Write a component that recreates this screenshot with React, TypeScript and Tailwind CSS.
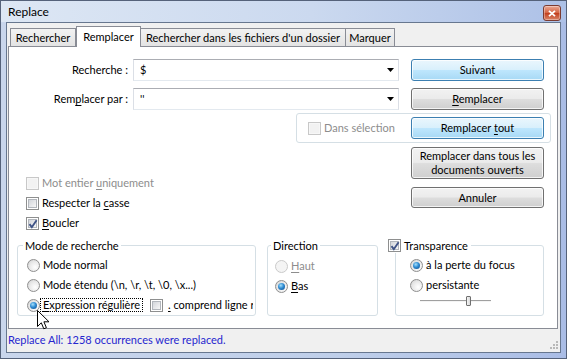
import React from "react";

const FONT = "font-['Lato','Segoe_UI',sans-serif]";

function CheckBox({ checked = false, disabled = false }: { checked?: boolean; disabled?: boolean }) {
  return (
    <span
      className={`relative flex h-[13px] w-[13px] shrink-0 items-center justify-center border ${
        disabled ? "border-[#c8c8c8] bg-[#f7f7f7]" : "border-[#8e8f8f] bg-white"
      }`}
    >
      <span
        className={`h-[9px] w-[9px] ${
          disabled
            ? "bg-[#f2f2f2]"
            : "border border-[#b2b6bc] bg-[linear-gradient(135deg,#d2d5da,#f7f7f7)]"
        }`}
      />
      {checked && (
        <svg className="absolute left-[1px] top-[1px]" width="10" height="10" viewBox="0 0 10 10">
          <path d="M1.5 5.2 L3.8 8.2 L8.6 1.2" fill="none" stroke="#3f5386" strokeWidth="1.9" />
        </svg>
      )}
    </span>
  );
}

function Radio({ checked = false, disabled = false }: { checked?: boolean; disabled?: boolean }) {
  return (
    <span
      className={`flex h-[13px] w-[13px] shrink-0 items-center justify-center rounded-full border ${
        disabled
          ? "border-[#cacaca] bg-[#f4f4f4]"
          : "border-[#8f8f8f] bg-[radial-gradient(circle_at_65%_65%,#ffffff_0%,#e8e8e8_55%,#cccccc_100%)]"
      }`}
    >
      {checked && (
        <span className="h-[7px] w-[7px] rounded-full bg-[radial-gradient(circle_at_40%_35%,#a6e0fb_0%,#2f8cd3_45%,#0c4583_100%)]" />
      )}
    </span>
  );
}

function WinButton({
  children,
  blue = false,
  className = "",
}: {
  children: React.ReactNode;
  blue?: boolean;
  className?: string;
}) {
  return (
    <div
      className={`flex w-[133px] items-center justify-center rounded-[3px] border text-center leading-[14px] shadow-[inset_0_0_0_1px_rgba(255,255,255,0.75)] ${
        blue
          ? "border-[#3c7fb1] bg-[linear-gradient(#eaf6fd_0%,#d9f0fc_48%,#bee6fd_52%,#a7d9f5_100%)]"
          : "border-[#707070] bg-[linear-gradient(#f2f2f2_0%,#ebebeb_48%,#dddddd_52%,#cfcfcf_100%)]"
      } ${className}`}
    >
      <span>{children}</span>
    </div>
  );
}

function Combo({ value }: { value: string }) {
  return (
    <div className="flex h-[22px] w-[266px] items-center border border-[#abadb3] border-b-[#e3e9ef] border-x-[#dbdfe6] bg-white pl-[6px] pr-[4px]">
      <span className="flex-1">{value}</span>
      <svg width="7" height="4" viewBox="0 0 7 4">
        <path d="M0 0H7L3.5 4Z" fill="#000" />
      </svg>
    </div>
  );
}

function U({ children }: { children: React.ReactNode }) {
  return <span className="underline underline-offset-[2px]">{children}</span>;
}

export default function App() {
  return (
    <div className={`relative h-[359px] w-[567px] overflow-hidden text-[11px] text-black ${FONT}`}>
      <div className="flex h-full w-full flex-col border border-[#55627a] bg-[linear-gradient(to_right,#c9d6ec,#bfcfea_60%,#aabde6)]">
        {/* title bar */}
        <div className="flex h-[21px] shrink-0 items-start justify-between bg-[linear-gradient(to_right,#dde7f4,#cbd9ef_55%,#adc1e7)] pl-[7px] pr-[5px]">
          <span className="pt-[3px] text-[12px] leading-[16px]">Replace</span>
          <div className="mt-[4px] flex h-[16px] w-[18px] items-center justify-center rounded-[3px] border border-[#7b3b31] bg-[linear-gradient(#eaa996,#d3613f_50%,#c2401f_52%,#d98467)] shadow-[inset_0_0_0_1px_rgba(255,255,255,0.35)]">
            <svg width="8" height="7" viewBox="0 0 8 7">
              <path d="M1 0.8 L7 6.2 M7 0.8 L1 6.2" stroke="#fff" strokeWidth="1.8" />
            </svg>
          </div>
        </div>

        {/* client area */}
        <div className="mx-[5px] mb-[5px] flex flex-1 flex-col border border-[#67778f] bg-[#f0f0f0]">
          {/* tabs */}
          <div className="flex h-[23px] items-end pl-[3px]">
            <div className="flex h-[18px] w-[66px] items-center justify-center border border-b-0 border-[#898c95] bg-[linear-gradient(#f2f2f2,#e3e3e3)] pt-[1px]">
              Rechercher
            </div>
            <div className="relative z-10 -mb-px flex h-[21px] w-[65px] items-start justify-center border border-b-0 border-[#898c95] bg-white pt-[2px]">
              Remplacer
            </div>
            <div className="flex h-[18px] w-[205px] items-center justify-center border border-b-0 border-l-0 border-[#898c95] bg-[linear-gradient(#f2f2f2,#e3e3e3)] pt-[1px]">
              Rechercher dans les fichiers d'un dossier
            </div>
            <div className="flex h-[18px] w-[49px] items-center justify-center border border-b-0 border-l-0 border-[#898c95] bg-[linear-gradient(#f2f2f2,#e3e3e3)] pt-[1px]">
              Marquer
            </div>
          </div>

          {/* tab panel */}
          <div className="ml-[1px] mr-[2px] flex h-[283px] flex-col border border-[#898c95] bg-white">
            <div className="mt-[12px] flex items-center">
              <span className="w-[119px] text-right">Recherche :</span>
              <div className="ml-[5px]">
                <Combo value="$" />
              </div>
              <WinButton blue className="ml-[12px] h-[22px]">
                Suivant
              </WinButton>
            </div>

            <div className="mt-[7px] flex items-center">
              <span className="w-[119px] text-right">
                Rem<U>p</U>lacer par :
              </span>
              <div className="ml-[5px]">
                <Combo value="''" />
              </div>
              <WinButton className="ml-[12px] h-[22px]">
                <U>R</U>emplacer
              </WinButton>
            </div>

            <div className="ml-[287px] mt-[3px] flex h-[30px] w-[255px] items-center rounded-[3px] border border-[#d5dfe5] pl-[11px]">
              <div className="flex w-[103px] items-center gap-[3px] text-[#8d8d8d]">
                <CheckBox disabled />
                <span>Dans sélection</span>
              </div>
              <WinButton blue className="h-[22px]">
                Remplacer <U>t</U>out
              </WinButton>
            </div>

            <div className="flex h-[90px]">
              <div className="w-[402px] pl-[17px] pt-[30px]">
                <div className="flex h-[20px] items-center gap-[3px] text-[#8d8d8d]">
                  <CheckBox disabled />
                  <span>
                    Mot entier <U>u</U>niquement
                  </span>
                </div>
                <div className="flex h-[20px] items-center gap-[3px]">
                  <CheckBox />
                  <span>
                    Respecter la <U>c</U>asse
                  </span>
                </div>
                <div className="flex h-[20px] items-center gap-[3px]">
                  <CheckBox checked />
                  <span>
                    <U>B</U>oucler
                  </span>
                </div>
              </div>
              <div className="flex w-[133px] flex-col gap-[8px] pt-[4px]">
                <WinButton className="h-[32px]">
                  Remplacer dans tous les
                  <br />
                  documents ouverts
                </WinButton>
                <WinButton className="h-[21px]">Annuler</WinButton>
              </div>
            </div>

            <div className="mt-[5px] flex">
              <fieldset className="ml-[8px] h-[78px] w-[239px] rounded-[3px] border border-[#d5dfe5]">
                <legend className="ml-[5px] px-[2px] leading-[15px]">Mode de recherche</legend>
                <div className="pl-[9px] pt-[2px]">
                  <div className="flex h-[20px] items-center gap-[3px]">
                    <Radio />
                    <span>Mode normal</span>
                  </div>
                  <div className="flex h-[20px] items-center gap-[3px]">
                    <Radio />
                    <span>Mode étendu (\n, \r, \t, \0, \x...)</span>
                  </div>
                  <div className="flex h-[20px] items-center">
                    <Radio checked />
                    <span className="ml-[1px] px-[2px] leading-[12px] outline-1 outline-dotted outline-black">
                      <U>E</U>xpression régulière
                    </span>
                    <span className="ml-[8px]">
                      <CheckBox />
                    </span>
                    <span className="ml-[5px] w-[85px] overflow-hidden whitespace-nowrap">
                      <U>.</U> comprend ligne r
                    </span>
                  </div>
                </div>
              </fieldset>

              <fieldset className="ml-[11px] h-[78px] w-[111px] rounded-[3px] border border-[#d5dfe5]">
                <legend className="ml-[3px] px-[2px] leading-[15px]">Direction</legend>
                <div className="pl-[7px] pt-[3px]">
                  <div className="flex h-[20px] items-center gap-[3px] text-[#8d8d8d]">
                    <Radio disabled />
                    <span>
                      <U>H</U>aut
                    </span>
                  </div>
                  <div className="flex h-[20px] items-center gap-[3px]">
                    <Radio checked />
                    <span>
                      <U>B</U>as
                    </span>
                  </div>
                </div>
              </fieldset>

              <fieldset className="ml-[17px] h-[78px] w-[149px] rounded-[3px] border border-[#d5dfe5]">
                <legend className="-ml-[8px] flex items-center gap-[3px] pr-[3px] leading-[15px]">
                  <CheckBox checked />
                  <span>Transparence</span>
                </legend>
                <div className="pl-[14px] pt-[2px]">
                  <div className="flex h-[20px] items-center gap-[3px]">
                    <Radio checked />
                    <span>à la perte du focus</span>
                  </div>
                  <div className="flex h-[20px] items-center gap-[3px]">
                    <Radio />
                    <span>persistante</span>
                  </div>
                  <div className="relative ml-[10px] mt-[1px] h-[10px] w-[71px]">
                    <div className="absolute left-0 top-[4px] h-[2px] w-full border-t border-b border-t-[#a0a0a0] border-b-[#f4f4f4]" />
                    <div className="absolute left-[46px] top-0 h-[10px] w-[5px] rounded-[1px] border border-[#6f6f6f] bg-[linear-gradient(to_right,#f4f4f4,#d9d9d9)]" />
                  </div>
                </div>
              </fieldset>
            </div>
          </div>

          {/* status bar */}
          <div className="flex h-[23px] items-center justify-between pb-[1px] pl-[1px] pr-[1px] text-[#2626cf]">
            <span>Replace All: 1258 occurrences were replaced.</span>
            <svg className="mt-[10px]" width="10" height="10" viewBox="0 0 10 10">
              <g fill="#b8b8b8">
                <rect x="7" y="1" width="2" height="2" />
                <rect x="4" y="4" width="2" height="2" />
                <rect x="7" y="4" width="2" height="2" />
                <rect x="1" y="7" width="2" height="2" />
                <rect x="4" y="7" width="2" height="2" />
                <rect x="7" y="7" width="2" height="2" />
              </g>
            </svg>
          </div>
        </div>
      </div>

      {/* mouse pointer */}
      <svg className="absolute left-[37px] top-[310px]" width="13" height="20" viewBox="0 0 13 20">
        <path
          d="M0.5 0.5 L0.5 16.5 L4.3 12.8 L6.8 18.8 L9.4 17.7 L6.9 11.8 L12 11.8 Z"
          fill="#fff"
          stroke="#000"
          strokeWidth="1"
          strokeLinejoin="miter"
        />
      </svg>
    </div>
  );
}
